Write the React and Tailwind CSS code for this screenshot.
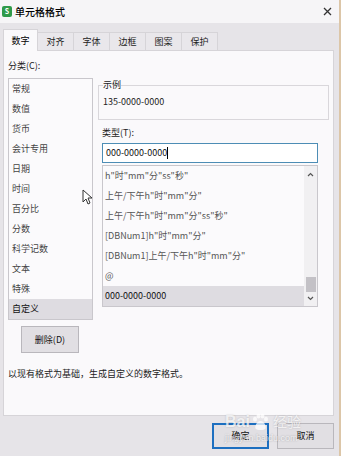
import React from "react";

const categories = ["常规", "数值", "货币", "会计专用", "日期", "时间", "百分比", "分数", "科学记数", "文本", "特殊", "自定义"];
const formats = [
  'h"时"mm"分"ss"秒"',
  '上午/下午h"时"mm"分"',
  '上午/下午h"时"mm"分"ss"秒"',
  '[DBNum1]h"时"mm"分"',
  '[DBNum1]上午/下午h"时"mm"分"',
  "@",
  "000-0000-0000",
];
const tabs = ["数字", "对齐", "字体", "边框", "图案", "保护"];

const App = () => {
  return (
    <div className="relative w-[341px] h-[456px] overflow-hidden bg-[#e6e4e8] border-r-2 border-[#dcc6a8] font-['Noto_Sans_CJK_SC',sans-serif] text-[9px] text-[#333]">
      {/* title bar */}
      <div className="h-[23px] bg-[#f6f5f7] flex items-center pl-[2px] pr-[7px]">
        <div className="w-[10px] h-[11px] rounded-[2px] bg-[#2f9a4a] flex items-center justify-center text-white text-[7px] font-bold leading-none">
          S
        </div>
        <span className="ml-[3px] text-[10px] text-black font-medium leading-none">单元格格式</span>
        <svg className="ml-auto" width="9" height="9" viewBox="0 0 9 9">
          <path d="M1 1 L8 8 M8 1 L1 8" stroke="#333" strokeWidth="1.3" />
        </svg>
      </div>

      {/* tabs */}
      <div className="h-[27px] flex items-end pl-[3px]">
        {tabs.map((t, i) =>
          i === 0 ? (
            <div key={t} className="w-[35px] h-[22px] bg-[#faf9fb] border border-b-0 border-[#d6d4d8] flex items-center justify-center text-black -mb-px relative z-10">
              {t}
            </div>
          ) : (
            <div key={t} className="w-[36px] h-[18px] bg-[#e9e7eb] border border-l-0 border-b-0 border-[#d6d4d8] flex items-center justify-center text-[#222]">
              {t}
            </div>
          )
        )}
      </div>

      {/* panel */}
      <div className="ml-[3px] w-[331px] h-[366px] bg-[#faf9fb] border border-[#d6d4d8] pl-[4px]">
        <div className="flex">
          <div className="w-[85px]">
            <div className="pt-[8px] leading-[14px] text-[#222]">分类(C):</div>
            <div className="mt-[5px] h-[242px] border border-[#c9c7cc] bg-[#fbfafc]">
              {categories.map((c, i) => (
                <div
                  key={c}
                  className={`h-[20px] flex items-center pl-[3px] ${i === categories.length - 1 ? "bg-[#dedce1] text-[#111]" : "text-[#444]"}`}
                >
                  {c}
                </div>
              ))}
            </div>
            <div className="mt-[6px] ml-[13px] w-[58px] h-[27px] bg-[#e1dfe3] border border-[#b9b7bc] flex items-center justify-center text-[#111]">
              删除(D)
            </div>
          </div>

          <div className="ml-[5px] w-[231px]">
            <fieldset className="mt-[28px] h-[41px] border border-[#d9d7db] px-[3px]">
              <legend className="px-0 ml-[1px] leading-[12px] text-[#222]">示例</legend>
              <div className="mt-[4px] ml-[1px] leading-[14px] text-[#222]">135-0000-0000</div>
            </fieldset>
            <div className="ml-[4px] mt-[6px] leading-[14px] text-[#222]">类型(T):</div>
            <div className="ml-[4px] mt-[3px] w-[216px] h-[20px] border border-[#4d8db5] bg-white flex items-center pl-[3px] text-[#111]">
              000-0000-0000
              <span className="w-px h-[12px] bg-black" />
            </div>
            <div className="ml-[4px] mt-[2px] w-[216px] h-[142px] border border-[#c9c7cc] bg-[#fbfafc] flex">
              <div className="flex-1">
                {formats.map((f, i) => (
                  <div
                    key={f}
                    className={`h-[20px] flex items-center pl-[2px] whitespace-nowrap ${i === formats.length - 1 ? "bg-[#dedce1] text-[#111]" : "text-[#555]"}`}
                  >
                    {f}
                  </div>
                ))}
              </div>
              <div className="w-[13px] bg-[#f1f0f2] flex flex-col items-center">
                <svg className="mt-[6px]" width="7" height="5" viewBox="0 0 7 5">
                  <path d="M1 4 L3.5 1.5 L6 4" stroke="#555" strokeWidth="1.2" fill="none" />
                </svg>
                <div className="mt-auto w-[10px] h-[15px] bg-[#c3c1c6]" />
                <svg className="mt-[4px] mb-[5px]" width="7" height="5" viewBox="0 0 7 5">
                  <path d="M1 1 L3.5 3.5 L6 1" stroke="#555" strokeWidth="1.2" fill="none" />
                </svg>
              </div>
            </div>
          </div>
        </div>
        <div className="mt-[15px] leading-[12px] text-[#222]">以现有格式为基础，生成自定义的数字格式。</div>
      </div>

      {/* buttons */}
      <div className="flex justify-end gap-[8px] pr-[5px] mt-[7px]">
        <div className="w-[57px] h-[26px] border-2 border-[#1d6fc0] bg-[#e1dfe3] flex items-center justify-center text-[#111]">
          确定
        </div>
        <div className="w-[57px] h-[26px] border border-[#b9b7bc] bg-[#e1dfe3] flex items-center justify-center text-[#111]">
          取消
        </div>
      </div>

      {/* mouse pointer */}
      <svg className="absolute left-[82px] top-[189px]" width="10" height="16" viewBox="0 0 10 16">
        <path d="M1 1 L1 13 L4 10 L6 15 L8 14 L6 9 L10 9 Z" fill="#fff" stroke="#333" strokeWidth="1" />
      </svg>

      {/* watermark */}
      <div className="absolute left-[225px] top-[413px] flex flex-col items-start text-white/75 pointer-events-none">
        <div className="flex items-center text-[16px] font-bold leading-none font-['Liberation_Sans','Noto_Sans_CJK_SC',sans-serif] [text-shadow:0_0_2px_rgba(0,0,0,0.2)]">
          Bai
          <svg className="ml-[1px]" width="18" height="18" viewBox="0 0 18 18">
            <g fill="rgba(255,255,255,0.75)">
              <ellipse cx="4" cy="6" rx="2" ry="2.6" />
              <ellipse cx="7.5" cy="3" rx="2" ry="2.6" />
              <ellipse cx="11.5" cy="3" rx="2" ry="2.6" />
              <ellipse cx="15" cy="6" rx="2" ry="2.6" />
              <path d="M9.5 8 C6 8 3.5 13 4.5 15.5 C6 17.5 13 17.5 14.5 15.5 C15.5 13 13 8 9.5 8 Z" />
            </g>
          </svg>
          <span className="ml-[4px] text-[14px] font-normal">经验</span>
        </div>
        <div className="mt-[3px] text-[9px] leading-none font-['Liberation_Sans',sans-serif] [text-shadow:0_0_2px_rgba(0,0,0,0.3)]">
          jingyan.baidu.com
        </div>
      </div>
    </div>
  );
};

export default App;
